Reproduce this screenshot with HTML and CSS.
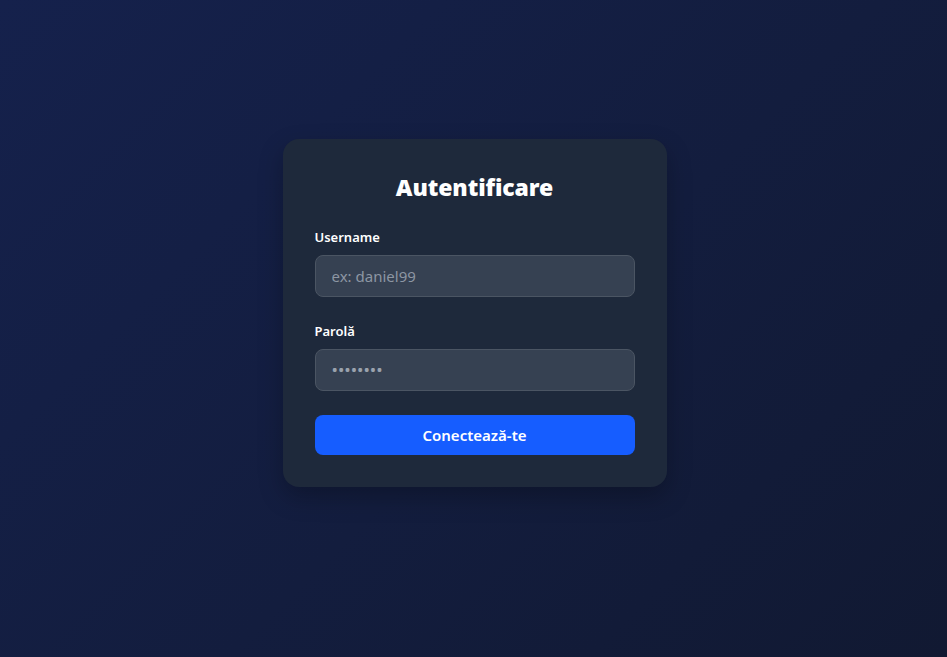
FILE: index.html
```html
<!DOCTYPE html>
<html lang="ro">
<head>
<meta charset="utf-8">
<title>Autentificare</title>
<link rel="stylesheet" href="styles.css">
</head>
<body>
<main class="page">
  <form class="card">
    <h1 class="title">Autentificare</h1>
    <label class="field">
      <span class="label">Username</span>
      <input class="input" type="text" placeholder="ex: daniel99">
    </label>
    <label class="field">
      <span class="label">Parolă</span>
      <input class="input input-pass" type="password" placeholder="••••••••">
    </label>
    <button class="btn" type="button">Conectează-te</button>
  </form>
</main>
</body>
</html>
```
FILE: styles.css
```css
* { box-sizing: border-box; }
html, body { margin: 0; height: 100%; }
body {
  font-family: "Noto Sans", "Open Sans", sans-serif;
  background: linear-gradient(135deg, #15214c 0%, #131d3e 55%, #111932 100%);
  color: #fff;
}
.page {
  min-height: 100%;
  display: flex;
  align-items: center;
  justify-content: center;
  padding: 0 0 31px 2px;
}
.card {
  width: 384px;
  background: #1e293b;
  border-radius: 16px;
  padding: 32px;
  box-shadow: 0 10px 25px rgba(0,0,0,0.25);
  display: flex;
  flex-direction: column;
}
.title {
  margin: 0 0 24px;
  font-family: "Noto Sans", sans-serif;
  font-weight: 900;
  font-size: 23px;
  line-height: 32px;
  text-align: center;
  letter-spacing: -0.1px;
}
.field {
  display: flex;
  flex-direction: column;
  margin-bottom: 24px;
}
.label {
  font-size: 13px;
  font-weight: 600;
  line-height: 20px;
  margin-bottom: 8px;
}
.input {
  height: 42px;
  background: #364152;
  border: 1px solid #4b5563;
  border-radius: 8px;
  padding: 0 16px;
  font-family: "Noto Sans", sans-serif;
  font-size: 15px;
  color: #fff;
  outline: none;
}
.input::placeholder { color: #8d96a3; }
.input-pass::placeholder { font-size: 17px; letter-spacing: 0; color: #9aa2ad; }
.btn {
  height: 40px;
  border: 0;
  border-radius: 8px;
  background: #165dff;
  color: #fff;
  font-family: "Noto Sans", sans-serif;
  font-size: 15px;
  font-weight: 600;
  cursor: pointer;
}
```
